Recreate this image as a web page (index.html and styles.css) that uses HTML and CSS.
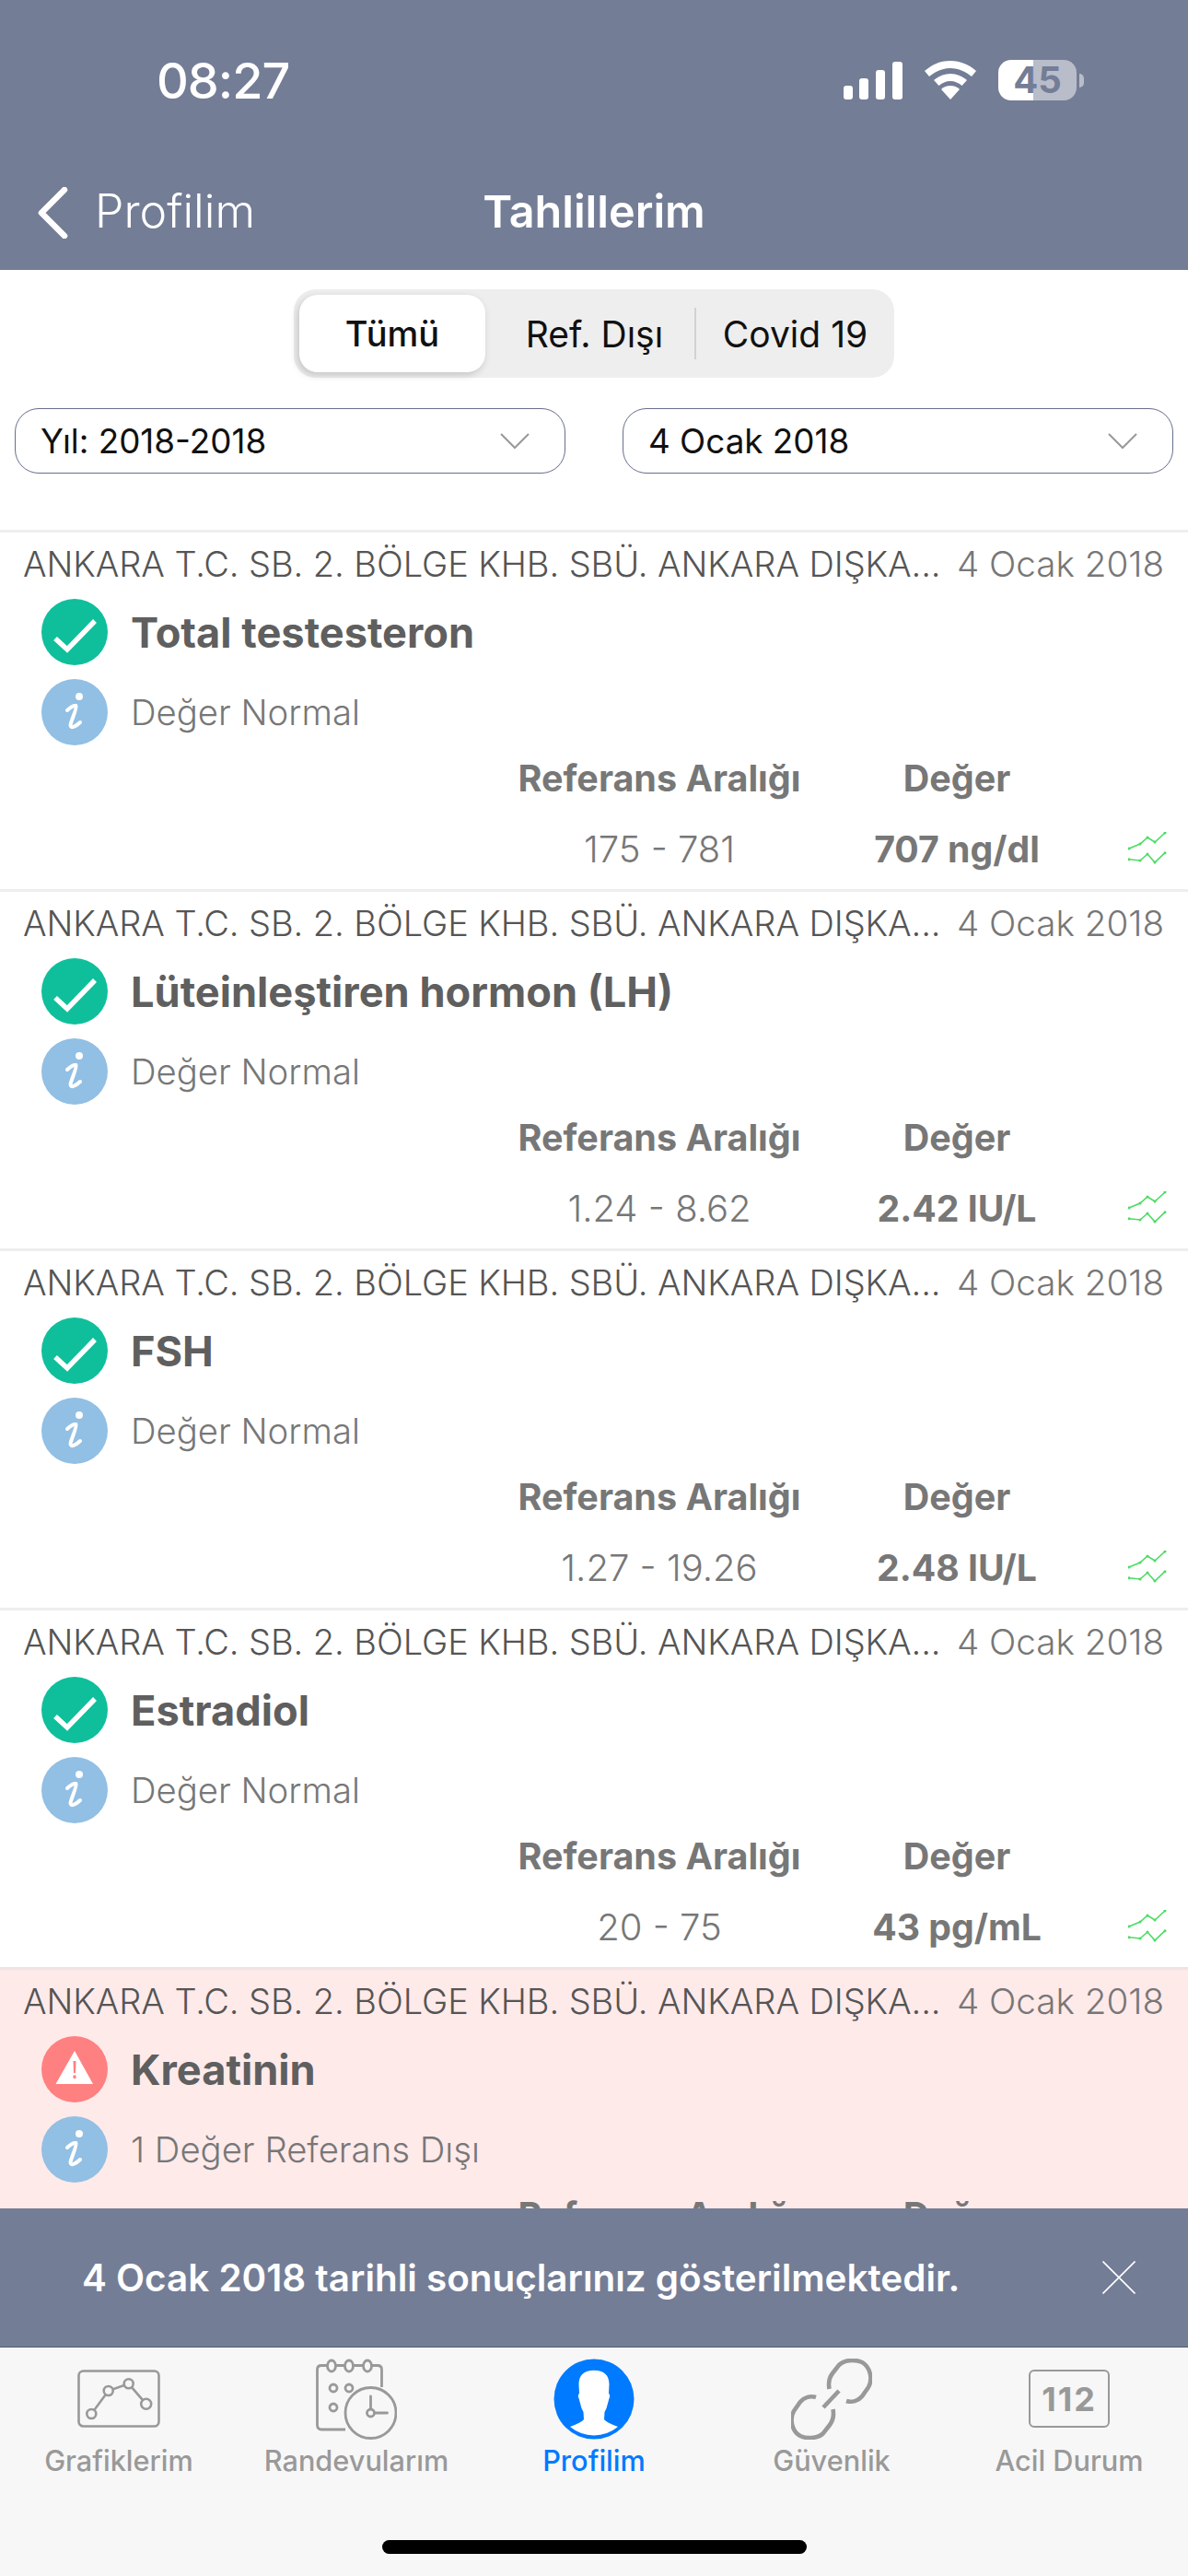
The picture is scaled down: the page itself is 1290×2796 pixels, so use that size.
FILE: index.html
```html
<!DOCTYPE html>
<html lang="tr">
<head>
<meta charset="utf-8">
<title>Tahlillerim</title>
<link rel="stylesheet" href="styles.css">
</head>
<body>
<svg class="defs" width="0" height="0" aria-hidden="true">
  <symbol id="ok" viewBox="0 0 72 72"><circle cx="36" cy="36" r="36" fill="#0fbf9c"/><polyline points="15,43 28,55 58,24" fill="none" stroke="#fff" stroke-width="5.5"/></symbol>
  <symbol id="warn" viewBox="0 0 72 72"><circle cx="36" cy="36" r="36" fill="#ff8080"/><path d="M36 16 56 52H15.500Z" fill="#fff"/><path d="M34.500 27h3l-.5 13h-2zM34.500 42.500h3V46h-3z" fill="#ff8080"/></symbol>
  <symbol id="info" viewBox="0 0 72 72"><circle cx="36" cy="36" r="36" fill="#92bfe4"/><circle cx="41" cy="19" r="4" fill="#fff"/><path d="M28 34C31 31 35 28.500 37.500 29 39 31 32 46 31.500 50 31.500 54 37 52 42 47" fill="none" stroke="#fff" stroke-width="4" stroke-linecap="round"/></symbol>
  <symbol id="trend" viewBox="0 0 42 36"><g fill="none" stroke="#4cdc64" stroke-width="1.600"><polyline points="1,18 13,13 21,6 29,11 40,1"/><polyline points="1,29.700 13,31 21,24 29,33 40,22.700"/></g><g fill="#4cdc64"><circle cx="1" cy="18" r="1.500"/><circle cx="13" cy="13" r="1.500"/><circle cx="21" cy="6" r="1.500"/><circle cx="29" cy="11" r="1.500"/><circle cx="40" cy="1" r="1.500"/><circle cx="1" cy="29.700" r="1.500"/><circle cx="13" cy="31" r="1.500"/><circle cx="21" cy="24" r="1.500"/><circle cx="29" cy="33" r="1.500"/><circle cx="40" cy="22.700" r="1.500"/></g></symbol>
  <symbol id="chev" viewBox="0 0 32 18"><polyline points="1,1 16,16 31,1" fill="none" stroke="#999" stroke-width="2"/></symbol>
</svg>

<div class="page">
  <header class="header">
    <div class="status">
      <span class="time">08:27</span>
      <div class="status-icons">
        <svg class="signal" width="64" height="41" viewBox="0 0 64 41"><rect x="0" y="26" width="10" height="15" rx="3" fill="#fff"/><rect x="17" y="18" width="10" height="23" rx="3" fill="#fff"/><rect x="35" y="9" width="10" height="32" rx="3" fill="#fff"/><rect x="53" y="0" width="11" height="41" rx="3" fill="#fff"/></svg>
        <svg class="wifi" width="58" height="44" viewBox="0 0 58 44"><path d="M29 6C18 6 9 10 1 17l5 6c6-5 14-9 23-9s17 4 23 9l5-6C49 10 40 6 29 6Z" fill="#fff" transform="translate(0 -5)"/><path d="M29 16c-7 0-13 3-18 7l5.500 6c3-3 8-5 12.500-5s9.500 2 12.500 5l5.500-6c-5-4-11-7-18-7Z" fill="#fff" transform="translate(0 -1)"/><path d="M29 28c-4 0-7.500 1.500-10 4l10 11 10-11c-2.500-2.500-6-4-10-4Z" fill="#fff"/></svg>
        <div class="battery"><span class="battery-body">45</span><span class="battery-nub"></span></div>
      </div>
    </div>
    <nav class="nav">
      <div class="back">
        <svg width="34" height="56" viewBox="0 0 34 56"><polyline points="30,3 5,28 30,53" fill="none" stroke="#fff" stroke-width="6.500" stroke-linecap="round" stroke-linejoin="round"/></svg>
        <span class="back-label">Profilim</span>
      </div>
      <h1 class="title">Tahlillerim</h1>
      <div></div>
    </nav>
  </header>

  <div class="segment">
    <div class="seg-item seg-active">Tümü</div>
    <div class="seg-item seg-mid">Ref. Dışı</div>
    <div class="seg-item seg-last">Covid 19</div>
  </div>

  <div class="filters">
    <div class="select"><span>Yıl: 2018-2018</span><svg class="chev" width="32" height="18"><use href="#chev"/></svg></div>
    <div class="select"><span>4 Ocak 2018</span><svg class="chev" width="32" height="18"><use href="#chev"/></svg></div>
  </div>

  <main class="list">
    <article class="row">
      <div class="row-head"><span class="hospital">ANKARA T.C. SB. 2. BÖLGE KHB. SBÜ. ANKARA DIŞKA...</span><span class="date">4 Ocak 2018</span></div>
      <div class="line line-first"><svg class="badge"><use href="#ok"/></svg><span class="name">Total testesteron</span></div>
      <div class="line"><svg class="badge"><use href="#info"/></svg><span class="note">Değer Normal</span></div>
      <div class="grid"><span class="label">Referans Aralığı</span><span class="label">Değer</span><span></span><span class="range">175 - 781</span><span class="value">707 ng/dl</span><svg class="trend"><use href="#trend"/></svg></div>
    </article>
    <article class="row">
      <div class="row-head"><span class="hospital">ANKARA T.C. SB. 2. BÖLGE KHB. SBÜ. ANKARA DIŞKA...</span><span class="date">4 Ocak 2018</span></div>
      <div class="line line-first"><svg class="badge"><use href="#ok"/></svg><span class="name">Lüteinleştiren hormon (LH)</span></div>
      <div class="line"><svg class="badge"><use href="#info"/></svg><span class="note">Değer Normal</span></div>
      <div class="grid"><span class="label">Referans Aralığı</span><span class="label">Değer</span><span></span><span class="range">1.24 - 8.62</span><span class="value">2.42 IU/L</span><svg class="trend"><use href="#trend"/></svg></div>
    </article>
    <article class="row">
      <div class="row-head"><span class="hospital">ANKARA T.C. SB. 2. BÖLGE KHB. SBÜ. ANKARA DIŞKA...</span><span class="date">4 Ocak 2018</span></div>
      <div class="line line-first"><svg class="badge"><use href="#ok"/></svg><span class="name">FSH</span></div>
      <div class="line"><svg class="badge"><use href="#info"/></svg><span class="note">Değer Normal</span></div>
      <div class="grid"><span class="label">Referans Aralığı</span><span class="label">Değer</span><span></span><span class="range">1.27 - 19.26</span><span class="value">2.48 IU/L</span><svg class="trend"><use href="#trend"/></svg></div>
    </article>
    <article class="row">
      <div class="row-head"><span class="hospital">ANKARA T.C. SB. 2. BÖLGE KHB. SBÜ. ANKARA DIŞKA...</span><span class="date">4 Ocak 2018</span></div>
      <div class="line line-first"><svg class="badge"><use href="#ok"/></svg><span class="name">Estradiol</span></div>
      <div class="line"><svg class="badge"><use href="#info"/></svg><span class="note">Değer Normal</span></div>
      <div class="grid"><span class="label">Referans Aralığı</span><span class="label">Değer</span><span></span><span class="range">20 - 75</span><span class="value">43 pg/mL</span><svg class="trend"><use href="#trend"/></svg></div>
    </article>
    <article class="row row-alert">
      <div class="row-head"><span class="hospital">ANKARA T.C. SB. 2. BÖLGE KHB. SBÜ. ANKARA DIŞKA...</span><span class="date">4 Ocak 2018</span></div>
      <div class="line line-first"><svg class="badge"><use href="#warn"/></svg><span class="name">Kreatinin</span></div>
      <div class="line"><svg class="badge"><use href="#info"/></svg><span class="note">1 Değer Referans Dışı</span></div>
      <div class="grid"><span class="label">Referans Aralığı</span><span class="label">Değer</span><span></span></div>
    </article>
  </main>

  <div class="banner">
    <span>4 Ocak 2018 tarihli sonuçlarınız gösterilmektedir.</span>
    <svg width="36" height="36" viewBox="0 0 36 36"><path d="M0.500 0.500 35.500 35.500M35.500 0.500 0.500 35.500" stroke="#fff" stroke-width="1.600" fill="none"/></svg>
  </div>

  <footer class="tabbar">
    <div class="tabs">
      <div class="tab">
        <svg class="tab-icon" width="90" height="88" viewBox="0 0 90 88"><rect x="1.500" y="13.500" width="87" height="60" rx="5" fill="none" stroke="#999" stroke-width="2.600"/><polyline points="15.300,60 33.700,35 55.700,27.300 74.700,49.300" fill="none" stroke="#999" stroke-width="2.600"/><g fill="#f7f7f7" stroke="#999" stroke-width="2.600"><circle cx="15.300" cy="60" r="5"/><circle cx="33.700" cy="35" r="5"/><circle cx="55.700" cy="27.300" r="5"/><circle cx="74.700" cy="49.300" r="5.500"/></g></svg>
        <span>Grafiklerim</span>
      </div>
      <div class="tab">
        <svg class="tab-icon" width="88" height="88" viewBox="0 0 88 88"><g fill="none" stroke="#999" stroke-width="2.800"><path d="M32 77H6C3 77 1.500 75 1.500 72V12C1.500 9 3 7.500 6 7.500H67C70 7.500 71.500 9 71.500 12V31"/><g fill="#f7f7f7"><ellipse cx="17" cy="8" rx="4.500" ry="6"/><ellipse cx="36" cy="8" rx="4.500" ry="6"/><ellipse cx="56" cy="8" rx="4.500" ry="6"/><circle cx="19" cy="32" r="4"/><circle cx="36" cy="32" r="4"/><circle cx="19" cy="53" r="4"/><circle cx="59.500" cy="59" r="27.500"/></g><path d="M59.500 41V54M64 59H77.500" stroke-linecap="round"/><circle cx="59.500" cy="59" r="4"/></g></svg>
        <span>Randevularım</span>
      </div>
      <div class="tab tab-active">
        <svg class="tab-icon" width="88" height="88" viewBox="0 0 88 88"><circle cx="44" cy="44" r="43.500" fill="#007aff"/><path d="M44 12.700C33 12.700 27.500 18 27.500 28L28 38C26.500 39 26.500 42 27.500 43L30.500 54 32.500 58 33 66C31 69 25 71 18 74A40.500 40.500 0 0 0 70 74C63 71 57 69 55 66L55.500 58 57.500 54 60.500 43C61.500 42 61.500 39 60 38L60.500 28C60.500 18 55 12.700 44 12.700Z" fill="#fff"/></svg>
        <span>Profilim</span>
      </div>
      <div class="tab">
        <svg class="tab-icon" width="88" height="88" viewBox="0 0 88 88"><g fill="none" stroke="#999" stroke-width="4.600"><path d="M41.500 33C40 25 42 20 45 16L52 7C57 2 68 0 77 4 86 9 89 22 84 31L77 41C73 46 66 48 60 46"/><path d="M41.500 33C40 25 42 20 45 16L52 7C57 2 68 0 77 4 86 9 89 22 84 31L77 41C73 46 66 48 60 46" transform="rotate(180 43.500 44)"/><path d="M35 53 52 35"/></g></svg>
        <span>Güvenlik</span>
      </div>
      <div class="tab">
        <div class="tab-icon emergency"><span>112</span></div>
        <span>Acil Durum</span>
      </div>
    </div>
    <div class="home"></div>
  </footer>
</div>
</body>
</html>
```
FILE: styles.css
```css
* { box-sizing: border-box; }
html, body { margin: 0; padding: 0; }
body { font-family: Inter, "Noto Sans", sans-serif; background: #fff; }
.defs { display: block; height: 0; }
.page { width: 1290px; height: 2796px; display: flex; flex-direction: column; overflow: hidden; background: #fff; }

.header { height: 293px; background: #747d96; color: #fff; flex: none; padding-top: 62px; }
.status { height: 50px; padding: 0 113px 0 170px; display: flex; justify-content: space-between; align-items: center; }
.time { font-size: 54px; font-weight: 500; letter-spacing: -1px; }
.status-icons { display: flex; align-items: center; gap: 23px; }
.battery { display: flex; align-items: center; gap: 3px; }
.battery-body { width: 85px; height: 44px; border-radius: 14px; background: linear-gradient(to right, #fff 45%, #b9bdca 45%); color: #747d96; font-size: 40px; font-weight: 700; line-height: 44px; text-align: center; }
.battery-nub { width: 5px; height: 15px; background: #b9bdca; border-radius: 0 5px 5px 0; }
.nav { display: grid; grid-template-columns: 1fr auto 1fr; align-items: center; height: 56px; margin-top: 87px; padding: 0 37px 0 40px; }
.back { display: flex; align-items: center; gap: 29px; font-size: 50px; font-weight: 300; }
.back-label { padding-bottom: 4px; }
.title { margin: 0 0 0 -3px; padding-bottom: 4px; font-size: 48.500px; font-weight: 600; }

.segment { flex: none; width: 652px; height: 96px; margin: 21px auto 0; padding: 6px 0; display: flex; align-items: center; background: #eee; border-radius: 24px; font-size: 39px; color: #111; }
.seg-item { height: 100%; display: flex; align-items: center; justify-content: center; }
.seg-active { width: 202px; margin-left: 6px; background: #fff; border-radius: 20px; box-shadow: -2px 3px 8px rgba(0,0,0,.18); font-size: 38px; font-weight: 500; }
.seg-mid { width: 229px; padding-left: 8px; position: relative; }
.seg-mid::after { content: ""; position: absolute; right: 0; top: 14px; bottom: 14px; width: 2px; background: #d2d2d2; }
.seg-last { flex: 1; }

.filters { flex: none; display: flex; gap: 62px; margin-top: 33px; padding: 0 16px; }
.select { flex: 1; height: 71px; padding: 0 38px 0 27px; display: flex; align-items: center; justify-content: space-between; border: 1.500px solid #666f8c; border-radius: 26px; font-size: 36.800px; color: #111; }

.list { flex: 1; min-height: 0; overflow: hidden; padding-top: 61px; }
.row { height: 390px; border-top: 3px solid #eee; color: #777; }
.row-alert { background: #ffeaea; border-top-color: #f0e2e0; }
.row-head { display: flex; justify-content: space-between; height: 46px; margin-top: 11px; padding: 0 26px 0 25px; align-items: center; font-weight: 300; white-space: nowrap; }
.hospital { color: #555; font-size: 38px; letter-spacing: -0.08px; }
.date { color: #777; font-size: 38.600px; }
.line { display: flex; align-items: center; gap: 25px; height: 72px; margin-top: 15px; padding-left: 45px; }
.badge { width: 72px; height: 72px; flex: none; }
.name { font-size: 45.200px; font-weight: 700; color: #5f5f5f; }
.note { font-size: 38.300px; font-weight: 300; color: #777; }
.grid { display: grid; grid-template-columns: 400px 246px 1fr; grid-auto-rows: 44px; row-gap: 32px; margin: 14px 0 0 516px; text-align: center; align-items: center; font-size: 39.500px; }
.label { font-weight: 700; }
.range { font-size: 40px; font-weight: 300; }
.value { font-size: 39.200px; font-weight: 700; }
.trend { width: 42px; height: 36px; margin-left: 63px; }

.banner { flex: none; height: 151px; padding: 0 57px 0 89px; display: flex; align-items: center; justify-content: space-between; background: #747d96; border-bottom: 1px solid #555c75; color: #fff; font-size: 40.400px; font-weight: 600; }

.tabbar { flex: none; height: 248px; background: #f7f7f7; display: flex; flex-direction: column; }
.tabs { display: grid; grid-template-columns: repeat(5, 1fr); padding-top: 12px; }
.tab { display: flex; flex-direction: column; align-items: center; color: #999; font-size: 30.700px; font-weight: 500; line-height: 44px; }
.tab-icon { height: 88px; display: block; margin-bottom: 1px; flex: none; }
.tab-active { color: #007aff; }
.emergency { width: 88px; height: 63px; margin: 12px 0 14px; border: 2.600px solid #999; border-radius: 6px; display: flex; align-items: center; justify-content: center; font-size: 36px; letter-spacing: 2px; font-weight: 700; line-height: 1; }
.home { width: 461px; height: 15px; margin: auto auto 24px; background: #000; border-radius: 8px; }
```
